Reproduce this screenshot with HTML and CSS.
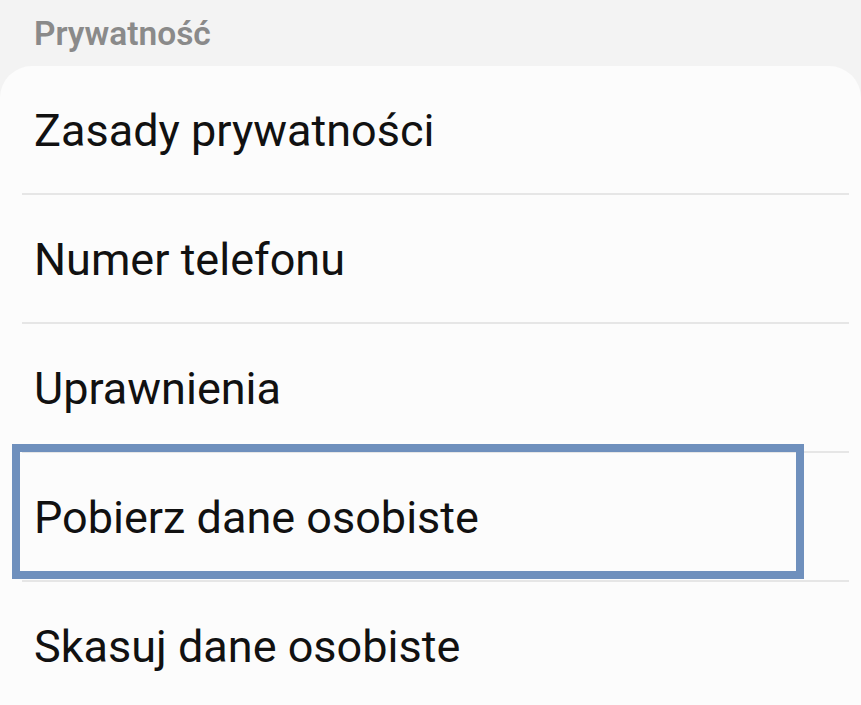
FILE: index.html
```html
<!DOCTYPE html>
<html lang="pl">
<head>
<meta charset="utf-8">
<title>Prywatność</title>
<link rel="stylesheet" href="styles.css">
</head>
<body>
<div class="screen">
  <div class="section-title">Prywatność</div>
  <div class="card">
    <div class="row"><span class="label">Zasady prywatności</span></div>
    <div class="row"><span class="label">Numer telefonu</span></div>
    <div class="row"><span class="label">Uprawnienia</span></div>
    <div class="row highlighted"><span class="label">Pobierz dane osobiste</span><div class="mark"></div></div>
    <div class="row"><span class="label">Skasuj dane osobiste</span></div>
  </div>
</div>
</body>
</html>
```
FILE: styles.css
```css
html, body {
  margin: 0;
  padding: 0;
  background: #f3f3f3;
}
.screen {
  width: 861px;
  height: 705px;
  overflow: hidden;
  font-family: Roboto, "Noto Sans", sans-serif;
}
.section-title {
  height: 66px;
  box-sizing: border-box;
  padding: 14px 0 0 34px;
  font-size: 33.5px;
  line-height: 40px;
  font-weight: 600;
  color: #8a8a8a;
}
.card {
  background: #fcfcfc;
  border-radius: 32px 32px 0 0;
  padding: 0 12px 0 22px;
  min-height: 700px;
}
.row {
  position: relative;
  height: 127px;
  display: flex;
  align-items: center;
  padding-left: 12px;
  border-bottom: 2px solid #e6e6e6;
}
.label {
  font-size: 45px;
  line-height: 52px;
  color: #111;
  margin-top: 3px;
}
.mark {
  position: absolute;
  left: -10px;
  top: -9px;
  width: 776px;
  height: 119px;
  border: 8px solid #6f90bd;
}
```
